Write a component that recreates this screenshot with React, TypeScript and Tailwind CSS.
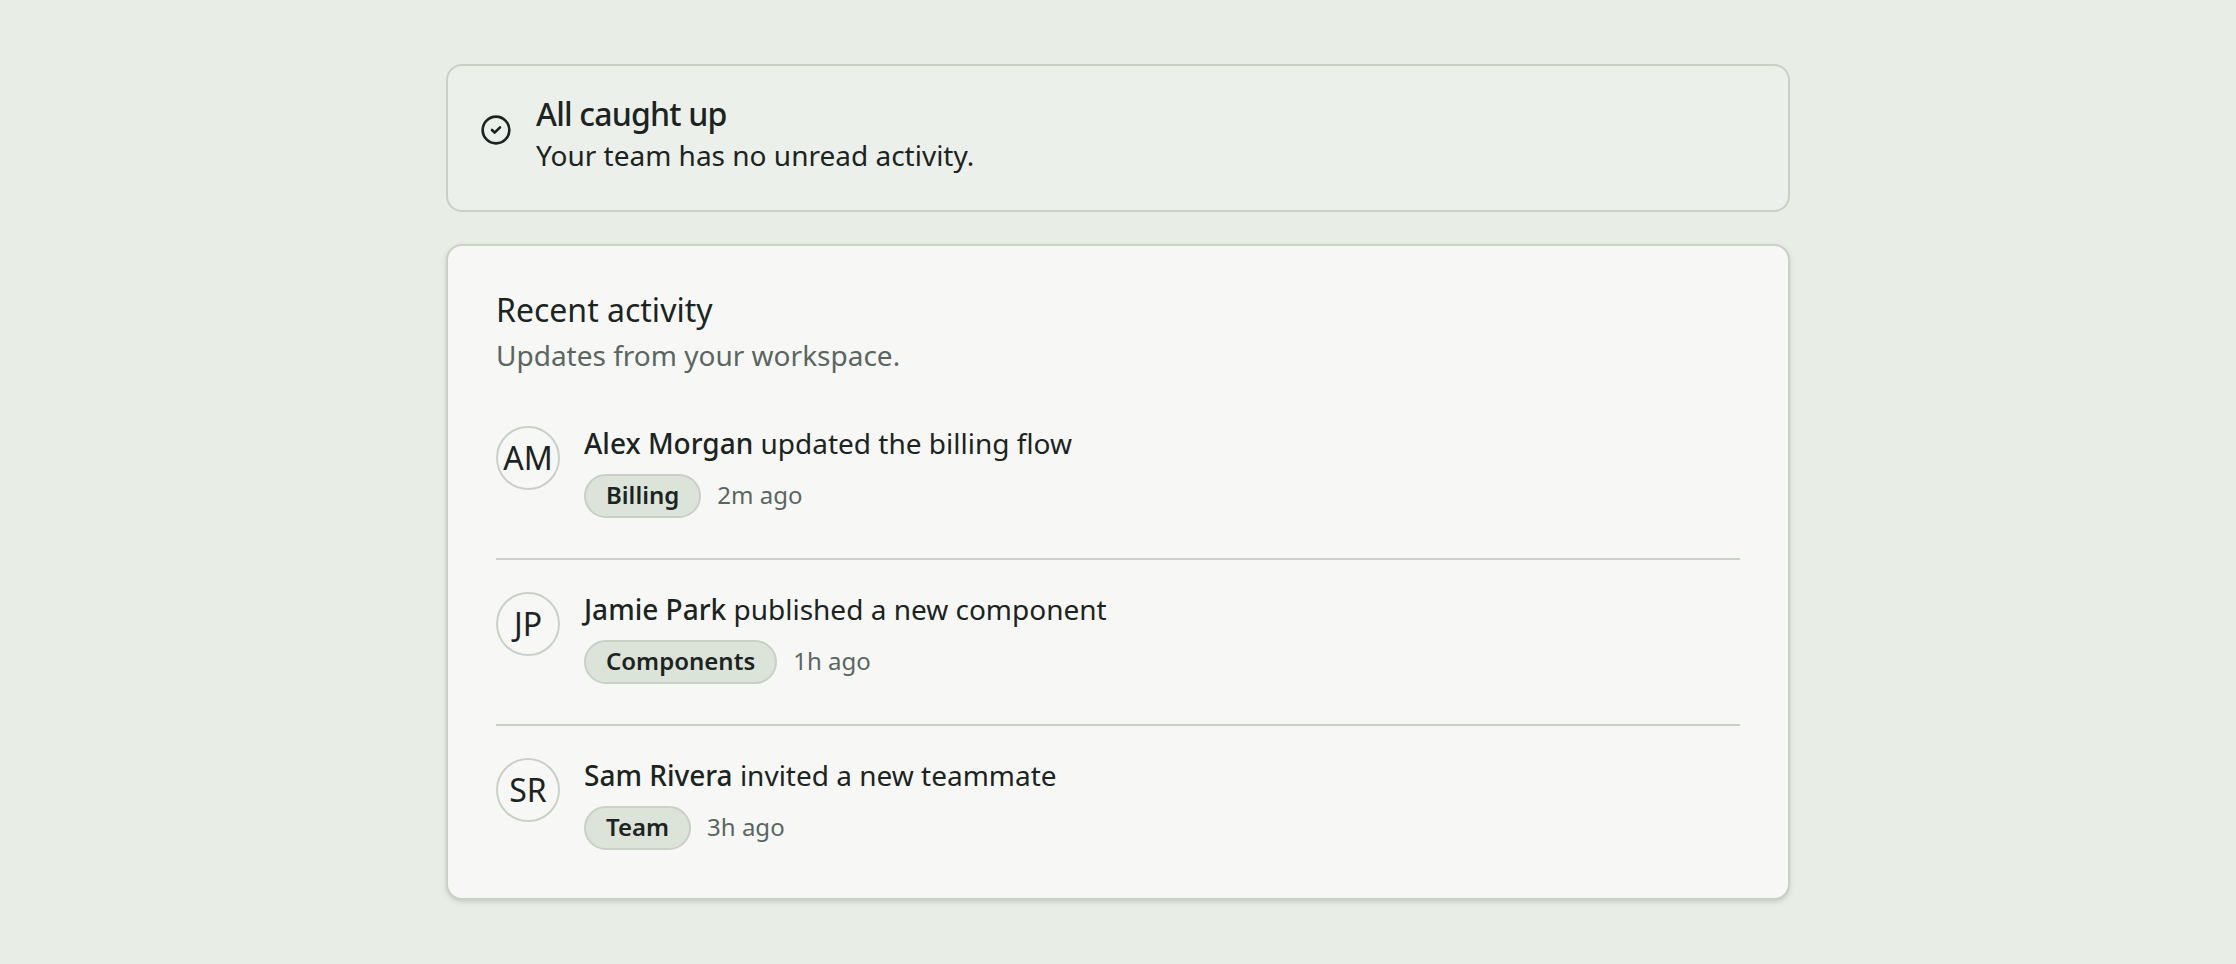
import React from 'react';
import { CircleCheck } from 'lucide-react';

interface ActivityItem {
  initials: string;
  name: string;
  action: string;
  tag: string;
  time: string;
}

const activities: ActivityItem[] = [
  { initials: 'AM', name: 'Alex Morgan', action: 'updated the billing flow', tag: 'Billing', time: '2m ago' },
  { initials: 'JP', name: 'Jamie Park', action: 'published a new component', tag: 'Components', time: '1h ago' },
  { initials: 'SR', name: 'Sam Rivera', action: 'invited a new teammate', tag: 'Team', time: '3h ago' },
];

const StatusAlert: React.FC = () => {
  return (
    <div
      role="status"
      className="flex items-start gap-6 rounded-2xl border-2 border-[#c9d0c6] bg-[#ebf0ea] px-8 pt-8 pb-[34px]"
    >
      <CircleCheck className="mt-4 size-8 shrink-0" aria-hidden="true" />
      <div className="flex flex-col gap-1">
        <h2 className="text-[32px] leading-8 font-medium tracking-tight">All caught up</h2>
        <p className="text-[28px] leading-[42px]">Your team has no unread activity.</p>
      </div>
    </div>
  );
};

const ActivityRow: React.FC<{ item: ActivityItem }> = ({ item }) => {
  return (
    <li className="flex items-start gap-6 border-b-2 border-[#c9d0c6] pt-7 pb-10 first:pt-0 last:border-b-0 last:pb-0">
      <span className="mt-1 flex size-16 shrink-0 items-center justify-center rounded-full border-2 border-[#c9d0c6] text-[32px] leading-[48px]">
        {item.initials}
      </span>
      <div className="flex flex-col gap-[10px]">
        <p className="text-[28px] leading-[42px]">
          <span className="font-medium">{item.name}</span> {item.action}
        </p>
        <div className="flex items-baseline gap-4 text-[24px] leading-[30px]">
          <span className="rounded-full border-2 border-[#c9d0c6] bg-[#dce4da] px-5 pt-1 pb-1.5 font-semibold">
            {item.tag}
          </span>
          <span className="text-[#5a6661]">{item.time}</span>
        </div>
      </div>
    </li>
  );
};

const App: React.FC = () => {
  return (
    <main className="min-h-screen bg-[#e8ede5] p-16 font-['Noto_Sans',sans-serif] text-[#1b2421]">
      <div className="mx-auto flex w-full max-w-[1344px] flex-col gap-8">
        <StatusAlert />
        <section className="rounded-2xl border-2 border-[#c9d0c6] bg-[#f7f8f6] p-12 shadow-[0_2px_6px_rgba(0,0,0,0.1),0_2px_4px_-2px_rgba(0,0,0,0.1)]">
          <div className="flex flex-col gap-2">
            <h2 className="text-[32px] leading-8">Recent activity</h2>
            <p className="text-[28px] leading-[42px] text-[#5a6661]">Updates from your workspace.</p>
          </div>
          <ul className="mt-[46px]">
            {activities.map((item) => (
              <ActivityRow key={item.initials} item={item} />
            ))}
          </ul>
        </section>
      </div>
    </main>
  );
};

export default App;
